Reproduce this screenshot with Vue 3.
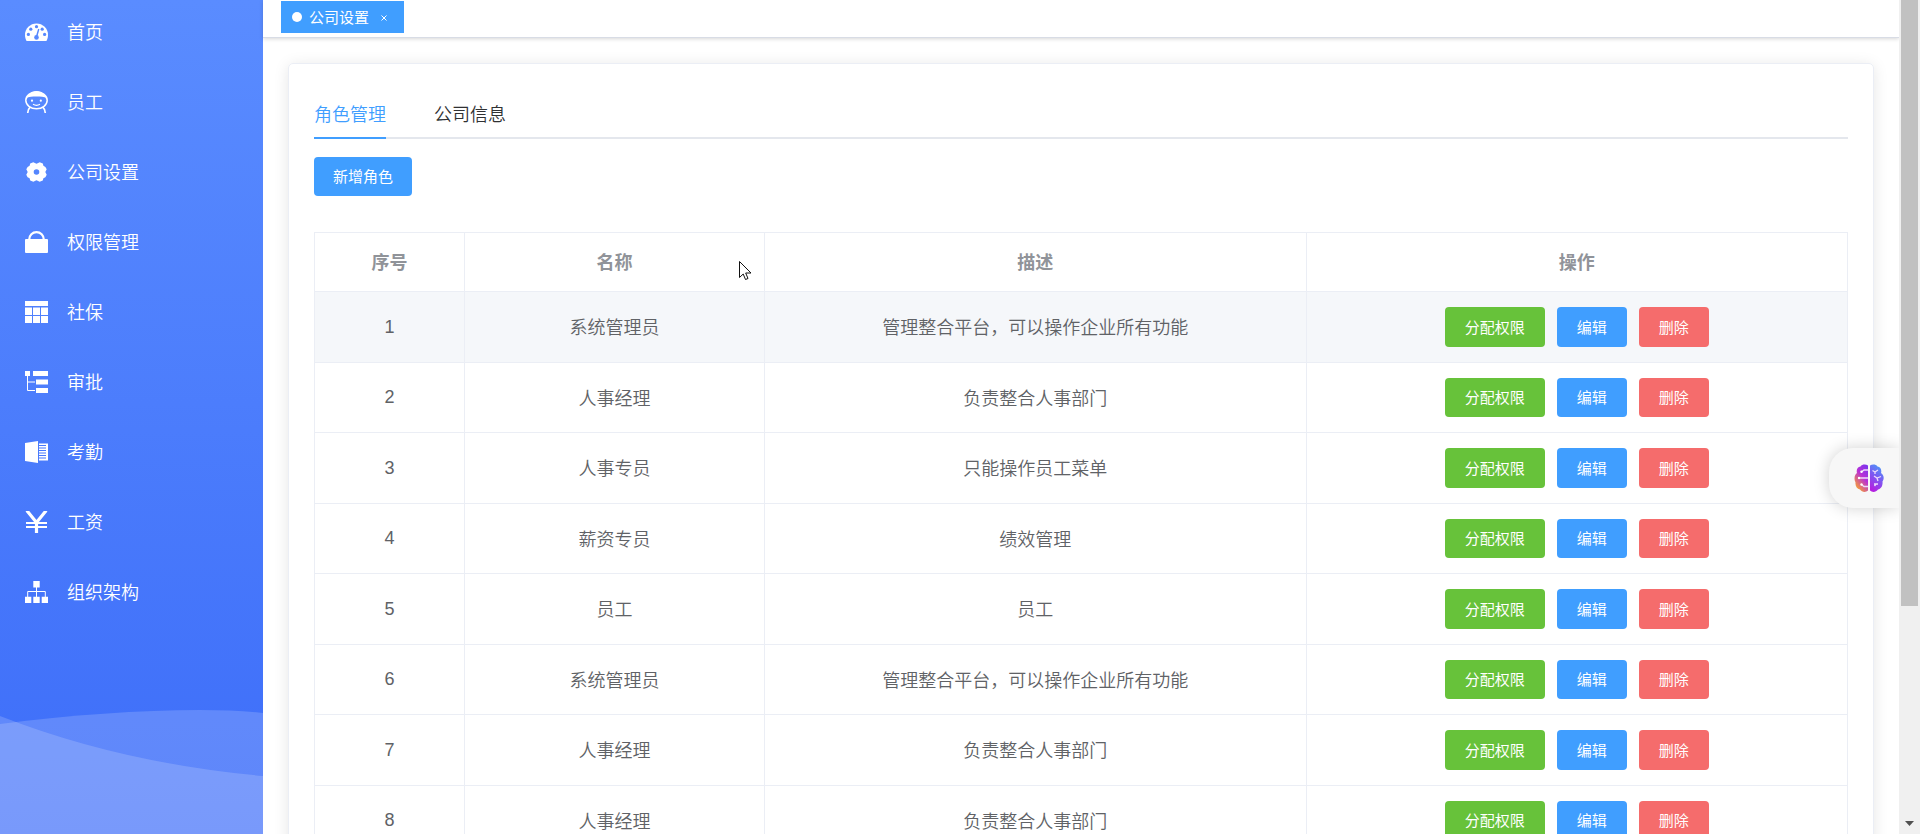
<script setup>
import { ref } from 'vue'

const menu = [
  { label: '首页', icon: 'dashboard' },
  { label: '员工', icon: 'people' },
  { label: '公司设置', icon: 'setting' },
  { label: '权限管理', icon: 'lock' },
  { label: '社保', icon: 'table' },
  { label: '审批', icon: 'tree' },
  { label: '考勤', icon: 'excel' },
  { label: '工资', icon: 'money' },
  { label: '组织架构', icon: 'org' }
]

const tabs = ['角色管理', '公司信息']
const active = ref(0)

const roles = [
  { name: '系统管理员', desc: '管理整合平台，可以操作企业所有功能' },
  { name: '人事经理', desc: '负责整合人事部门' },
  { name: '人事专员', desc: '只能操作员工菜单' },
  { name: '薪资专员', desc: '绩效管理' },
  { name: '员工', desc: '员工' },
  { name: '系统管理员', desc: '管理整合平台，可以操作企业所有功能' },
  { name: '人事经理', desc: '负责整合人事部门' },
  { name: '人事经理', desc: '负责整合人事部门' }
]
</script>

<template>
  <div class="app">
    <aside class="sidebar">
      <nav class="menu">
        <a v-for="m in menu" :key="m.label" class="menu-item" href="#">
          <svg class="menu-icon" viewBox="0 0 23 22" aria-hidden="true">
            <g v-if="m.icon === 'dashboard'">
              <path fill="#fff" d="M1.6 20C.6 18.400 0 16.200 0 14A11.500 11.500 0 0 1 23 14C23 16.200 22.400 18.400 21.400 20Z" />
              <g fill="#5688ff">
                <circle cx="3.400" cy="13.400" r="1.600" />
                <circle cx="5.800" cy="8.200" r="1.600" />
                <circle cx="11.500" cy="5.700" r="1.600" />
                <circle cx="17.200" cy="8.200" r="1.600" />
                <circle cx="19.600" cy="13.400" r="1.600" />
                <circle cx="11.500" cy="16.400" r="2.300" />
              </g>
              <path d="M11.600 15.500 13.600 8.600" stroke="#5688ff" stroke-width="1.500" stroke-linecap="round" />
            </g>
            <g v-else-if="m.icon === 'people'">
              <ellipse cx="11.500" cy="9.300" rx="10.700" ry="8.500" fill="none" stroke="#fff" stroke-width="1.500" />
              <path fill="#fff" d="M1.200 7C3 2.500 7 .2 11.500 .2S20 2.500 21.800 7C19 5.800 15.500 5.500 11.500 5.500S4 5.800 1.200 7Z" />
              <circle cx="7" cy="9.700" r="1.100" fill="#fff" />
              <circle cx="15.800" cy="9.700" r="1.100" fill="#fff" />
              <path fill="none" stroke="#fff" stroke-width="1.200" d="M8 13.300Q11.500 15.300 15 13.300" />
              <path fill="none" stroke="#fff" stroke-width="1.700" d="M5.200 16.200Q2.700 18.500 2.700 22M17.800 16.200Q20.300 18.500 20.300 22" />
            </g>
            <g v-else-if="m.icon === 'setting'">
              <path
                fill="#fff"
                fill-rule="evenodd"
                d="M8.300 1.300 11.500 2.800 14.700 1.300 17.800 2.600 18.400 4.800 20.400 6 21.700 8.200 20.300 11 21.700 13.800 20.400 16.200 18.400 17.200 17.800 19.400 14.700 20.700 11.500 19.200 8.300 20.700 5.200 19.400 4.600 17.200 2.600 16.200 1.300 13.800 2.700 11 1.300 8.200 2.600 6 4.600 4.800 5.200 2.600ZM11.500 8.200A2.800 2.800 0 1 0 11.500 13.800 2.800 2.800 0 1 0 11.500 8.200Z"
              />
            </g>
            <g v-else-if="m.icon === 'lock'">
              <rect y="8" width="23" height="14" rx="1" fill="#fff" />
              <path fill="none" stroke="#fff" stroke-width="2.200" d="M4.200 9V8.500A7.300 7.400 0 0 1 18.800 8.500V9" />
            </g>
            <path v-else-if="m.icon === 'table'" fill="#fff" d="M0 0H23V5H0ZM0 6.500H7V14H0ZM8 6.500H15V14H8ZM16 6.500H23V14H16ZM0 15H7V22H0ZM8 15H15V22H8ZM16 15H23V22H16Z" />
            <g v-else-if="m.icon === 'tree'">
              <path fill="#fff" d="M0 0H5V5H0ZM8 0H23V5H8ZM11 8.500H23V13.500H11ZM11 17H23V22H11Z" />
              <path fill="none" stroke="#fff" d="M2.500 5V19.500H10M2.500 11H10" />
            </g>
            <g v-else-if="m.icon === 'excel'">
              <path fill="#fff" d="M0 2 13 0V22L0 20ZM14 2.500H23V19.500H14Z" />
              <path stroke="#4879fd" stroke-width="1" d="M14 4.500H21M14 7H21M14 9.500H21M14 12H21M14 14.500H21M14 17H21" />
            </g>
            <g v-else-if="m.icon === 'money'" fill="none" stroke="#fff">
              <path stroke-width="3.200" d="M1.800 -.500 11.500 11.500 21.200 -.500M11.500 11V22" />
              <path stroke-width="2" d="M1 12H22M1 16H22" />
            </g>
            <g v-else>
              <path fill="#fff" d="M8.300 0H14.700V6.500H8.300ZM0 15.700H6.300V22H0ZM8.300 15.700H14.700V22H8.300ZM16.700 15.700H23V22H16.700Z" />
              <path fill="none" stroke="#fff" d="M11.500 6V16M2.700 16V10.500H20.300V16" />
            </g>
          </svg>
          <span class="menu-text">{{ m.label }}</span>
        </a>
      </nav>
      <svg class="waves" viewBox="0 0 263 126" preserveAspectRatio="none" aria-hidden="true">
        <path fill="#fff" fill-opacity=".17" d="M0 16C70 7 140 2 200 2Q236 2 263 5V126H0Z" />
        <path fill="#fff" fill-opacity=".17" d="M0 8Q120 55 263 68V126H0Z" />
      </svg>
    </aside>

    <main class="main">
      <header class="tags">
        <div class="tag">
          <i class="dot"></i>
          <a href="#">公司设置</a>
          <button class="close" type="button" aria-label="关闭">
            <svg viewBox="0 0 6 6" aria-hidden="true"><path d="M.5.5 5.500 5.500M5.500.5.5 5.500" stroke="#fff" /></svg>
          </button>
        </div>
      </header>

      <section class="card">
        <div class="tabs" role="tablist">
          <button
            v-for="(t, i) in tabs"
            :key="t"
            type="button"
            role="tab"
            :aria-selected="active === i"
            class="tab"
            :class="{ active: active === i }"
            @click="active = i"
          >{{ t }}</button>
        </div>

        <button class="btn primary add" type="button">新增角色</button>

        <table class="roles">
          <colgroup><col class="c-index" /><col class="c-name" /><col /><col /></colgroup>
          <thead>
            <tr><th>序号</th><th>名称</th><th>描述</th><th>操作</th></tr>
          </thead>
          <tbody>
            <tr v-for="(r, i) in roles" :key="i" :class="{ hover: i === 0 }">
              <td>{{ i + 1 }}</td>
              <td class="text">{{ r.name }}</td>
              <td class="text">{{ r.desc }}</td>
              <td>
                <div class="ops">
                  <button class="btn success" type="button">分配权限</button>
                  <button class="btn primary" type="button">编辑</button>
                  <button class="btn danger" type="button">删除</button>
                </div>
              </td>
            </tr>
          </tbody>
        </table>
      </section>

      <button class="assistant" type="button" aria-label="助手">
        <svg viewBox="0 0 30 28" aria-hidden="true">
          <defs>
            <linearGradient id="brainLeft" x1=".9" y1="0" x2=".3" y2="1">
              <stop offset="0" stop-color="#7a35ee" /><stop offset=".45" stop-color="#b92fd6" /><stop offset=".95" stop-color="#f49a3c" />
            </linearGradient>
            <linearGradient id="brainRight" x1=".7" y1="0" x2=".3" y2="1">
              <stop offset="0" stop-color="#4a9af8" /><stop offset=".45" stop-color="#7a5cf2" /><stop offset="1" stop-color="#b51fe0" />
            </linearGradient>
          </defs>
          <path fill="url(#brainLeft)" d="M14 1.500C12 0 8 0 6.500 2.500C3.500 3 2 6 3 9C0 11 0 16 1.500 18C1 22 3 25 6 25.500C8 28.500 12 28.500 14 26.500Z" />
          <path fill="url(#brainRight)" d="M16 1.500C18 0 22 0 23.500 2.500C26.500 3 28 6 27 9C30 11 30.500 15 28.500 17.500C29 22 27 25 24 25.500C22 28.500 18 28.500 16 26.500Z" />
          <g fill="none" stroke="#eed9fb" stroke-width="1.300">
            <path d="M14 6H10L7.500 8M14 14H5M14 22.500H10L7.500 20.500M20 20H24M22 20 20.500 22M18.500 6.500 21 8 24 6M21 8V10M20 12 23 14 27 12.500M23 14 24 17" />
          </g>
          <g fill="#fff"><circle cx="7.500" cy="7.800" r="1.200" /><circle cx="5" cy="14" r="1.200" /><circle cx="7.500" cy="20.500" r="1.200" /></g>
        </svg>
      </button>
    </main>

    <div class="scrollbar" aria-hidden="true">
      <div class="thumb"></div>
      <svg class="arrow" viewBox="0 0 9 5"><path fill="#505050" d="M0 0H9L4.500 5Z" /></svg>
    </div>

    <svg class="pointer" viewBox="0 0 13 20" aria-hidden="true">
      <path fill="#fff" stroke="#111" stroke-linejoin="round" d="M.5.500V16.500L4.200 13 6.500 18.500 9 17.500 6.700 12H12Z" />
    </svg>
  </div>
</template>

<style>
body {
  background: #fff;
}
</style>

<style scoped>
.app,
.app * {
  box-sizing: border-box;
}
.app {
  display: flex;
  height: 100vh;
  overflow: hidden;
  font-family: "Liberation Sans", "Noto Sans CJK SC", sans-serif;
  font-size: 18px;
  font-weight: 350;
  color: #606266;
}
button {
  font-family: inherit;
  font-weight: inherit;
  border: 0;
  cursor: pointer;
}
a {
  color: inherit;
  text-decoration: none;
}
.sidebar {
  position: relative;
  flex: 0 0 263px;
  background: linear-gradient(#5a8cff, #3d6df9);
}
.menu {
  display: flex;
  flex-direction: column;
  gap: 6px;
}
.menu-item {
  display: flex;
  align-items: center;
  gap: 19px;
  height: 64px;
  padding-left: 25px;
  color: #fff;
}
.menu-icon {
  width: 23px;
  height: 22px;
}
.menu-text {
  padding-bottom: 2px;
}
.waves {
  position: absolute;
  left: 0;
  bottom: 0;
  width: 100%;
  height: 126px;
}
.main {
  position: relative;
  flex: 1;
  min-width: 0;
  display: flow-root;
}
.tags {
  height: 38px;
  padding: 1px 18px 0;
  border-bottom: 1px solid #d8dce5;
  box-shadow: 0 1px 4px rgba(0, 0, 0, 0.16);
}
.tag {
  display: inline-flex;
  align-items: center;
  height: 32px;
  padding: 0 16px 0 11px;
  background: #409eff;
  color: #fff;
  font-size: 15px;
  font-weight: 400;
}
.tag a {
  padding-bottom: 2px;
}
.dot {
  width: 10px;
  height: 10px;
  margin-right: 7px;
  border-radius: 50%;
  background: #fff;
}
.close {
  display: flex;
  margin-left: 11px;
  padding: 2px 1px 0;
  background: none;
}
.close svg {
  width: 6px;
  height: 6px;
}
.card {
  margin: 25px;
  padding: 25px;
  border: 1px solid #ebeef5;
  border-radius: 5px;
  box-shadow: 0 2px 15px rgba(0, 0, 0, 0.1);
}
.tabs {
  display: flex;
  gap: 48px;
  height: 50px;
  border-bottom: 2px solid #e4e7ed;
}
.tab {
  height: 50px;
  padding: 0;
  border-bottom: 2px solid transparent;
  background: none;
  color: #303133;
  font-size: 18px;
}
.tab.active {
  border-bottom-color: #409eff;
  color: #409eff;
}
.btn {
  height: 39px;
  padding: 0 20px 2px;
  border-radius: 4px;
  color: #fff;
  font-size: 15px;
  font-weight: 400;
}
.primary {
  background: #409eff;
}
.success {
  background: #67c23a;
}
.danger {
  background: #f56c6c;
}
.add {
  display: block;
  margin: 18px 0 36px;
  padding: 0 19px 2px;
}
.roles {
  width: 100%;
  table-layout: fixed;
  border-collapse: separate;
  border-spacing: 0;
  border: solid #ebeef5;
  border-width: 1px 0 0 1px;
  text-align: center;
}
.c-index {
  width: 150px;
}
.c-name {
  width: 300px;
}
.roles th,
.roles td {
  padding: 0;
  border: solid #ebeef5;
  border-width: 0 1px 1px 0;
}
.roles th {
  height: 59px;
  padding-bottom: 2px;
  color: #909399;
}
.roles td {
  height: 70px;
}
.roles .text {
  padding-bottom: 2px;
}
.hover td {
  background: #f5f7fa;
}
.ops {
  display: flex;
  justify-content: center;
  gap: 12px;
}
/* Rows alternate by one pixel so that a pair measures 141px. */
.roles tbody tr:nth-child(odd) td {
  height: 71px;
}
.roles tbody tr:nth-child(odd) .btn {
  height: 40px;
}
.assistant {
  position: absolute;
  right: 0;
  top: 448px;
  display: flex;
  align-items: center;
  width: 70px;
  height: 60px;
  padding: 0 0 0 25px;
  border-radius: 24px 0 0 24px;
  background: #f7f7f7;
  box-shadow: 0 0 16px rgba(0, 0, 0, 0.18);
}
.assistant svg {
  width: 30px;
  height: 28px;
}
.scrollbar {
  position: relative;
  z-index: 1;
  flex: 0 0 21px;
  display: flex;
  flex-direction: column;
  align-items: center;
  justify-content: space-between;
  padding-bottom: 8px;
  background: #f0f0f0;
}
.thumb {
  width: 17px;
  height: 606px;
  background: #c1c1c1;
}
.arrow {
  width: 9px;
  height: 5px;
}
.pointer {
  position: absolute;
  left: 739px;
  top: 261px;
  width: 13px;
  height: 20px;
  pointer-events: none;
}
</style>
